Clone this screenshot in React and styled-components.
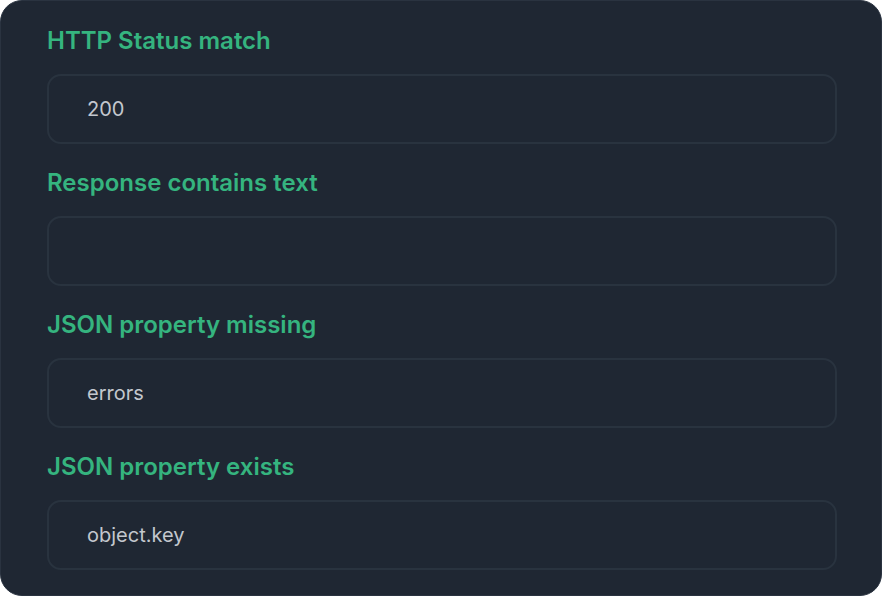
import React from "react";
import styled, { createGlobalStyle } from "styled-components";

const GlobalStyle = createGlobalStyle`
  html, body {
    margin: 0;
    padding: 0;
    background: #ffffff;
  }
  * {
    box-sizing: border-box;
  }
`;

const Card = styled.div`
  width: 882px;
  height: 596px;
  background: #1f2733;
  border: 1px solid #2a3340;
  border-radius: 22px;
  padding: 25px 44px 26px 46px;
  display: flex;
  flex-direction: column;
  gap: 24px;
  font-family: Inter, "Noto Sans", sans-serif;
`;

const Field = styled.div`
  display: flex;
  flex-direction: column;
  gap: 18px;
`;

const Label = styled.label`
  color: #35b47f;
  font-size: 24px;
  font-weight: 600;
  line-height: 30px;
`;

const Input = styled.div`
  height: 70px;
  border: 2px solid #29333f;
  border-radius: 14px;
  padding: 0 38px;
  display: flex;
  align-items: center;
  color: #c3c7ce;
  font-size: 20px;
  font-weight: 400;
`;

const fields = [
  { label: "HTTP Status match", value: "200" },
  { label: "Response contains text", value: "" },
  { label: "JSON property missing", value: "errors" },
  { label: "JSON property exists", value: "object.key" },
];

const App = () => {
  return (
    <>
      <GlobalStyle />
      <Card>
        {fields.map(item => (
          <Field key={item.label}>
            <Label>{item.label}</Label>
            <Input>{item.value}</Input>
          </Field>
        ))}
      </Card>
    </>
  );
};

export default App;
